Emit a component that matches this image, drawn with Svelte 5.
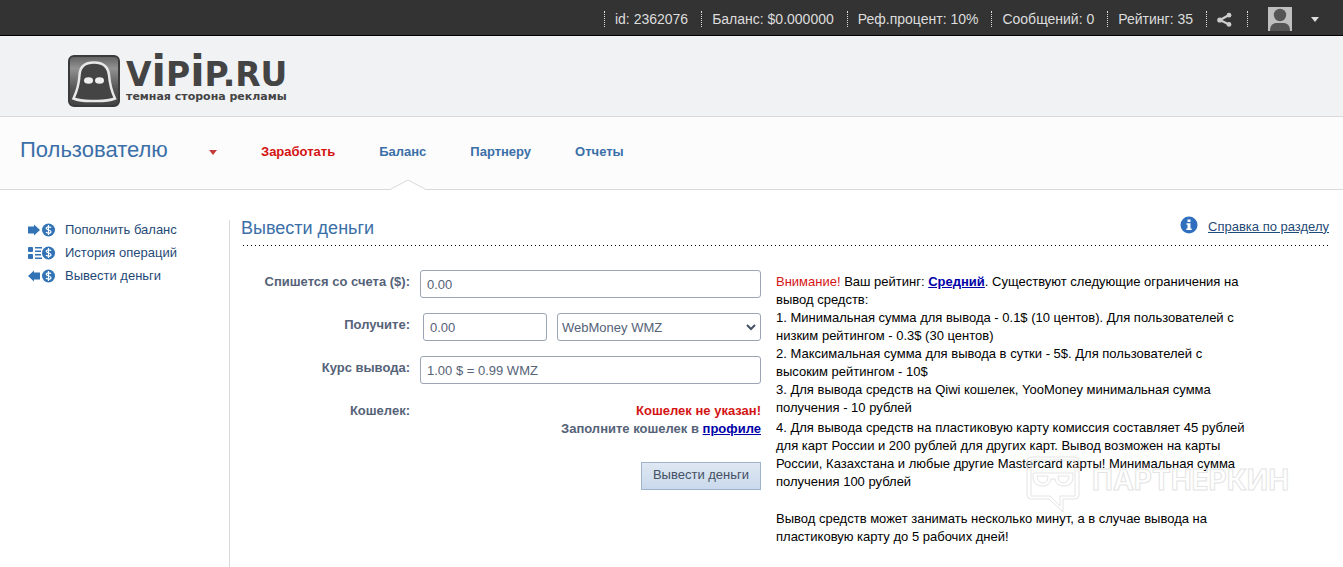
<script lang="ts">
  const stats = [
    'id: 2362076',
    'Баланс: $0.000000',
    'Реф.процент: 10%',
    'Сообщений: 0',
    'Рейтинг: 35'
  ];

  const tabs = [
    { label: 'Заработать', hot: true },
    { label: 'Баланс', active: true },
    { label: 'Партнеру' },
    { label: 'Отчеты' }
  ];

  const menu = [
    { icon: 'in', label: 'Пополнить баланс' },
    { icon: 'list', label: 'История операций' },
    { icon: 'out', label: 'Вывести деньги' }
  ];

  let amount = $state('0.00');
  let receive = $state('0.00');
  let currency = $state('WebMoney WMZ');
  let rate = $state('1.00 $ = 0.99 WMZ');
</script>

<div class="topbar">
  {#each stats as stat}
    <span class="stat">{stat}</span>
  {/each}
  <button class="share" aria-label="Поделиться">
    <svg width="15" height="15" viewBox="0 0 15 15">
      <path d="M12 3 3 8l9 4.500" fill="none" stroke="#ccc" stroke-width="2.200" />
      <circle cx="12" cy="3.200" r="2.400" fill="#ccc" />
      <circle cx="2.800" cy="8" r="2.600" fill="#ccc" />
      <circle cx="12" cy="12.400" r="2.400" fill="#ccc" />
    </svg>
  </button>
  <button class="account" aria-label="Профиль">
    <svg width="24" height="24" viewBox="0 0 24 24">
      <rect width="24" height="24" fill="#bfbfbf" />
      <circle cx="12" cy="8" r="6.200" fill="#555" />
      <path d="M2 24c0-6 3-8 7-8h6c4 0 7 2 7 8z" fill="#555" />
    </svg>
    <svg width="8" height="5" viewBox="0 0 8 5"><path d="M0 0h8L4 5z" fill="#ddd" /></svg>
  </button>
</div>

<header class="header">
  <a class="logo" href="/">
    <svg width="52" height="52" viewBox="0 0 52 52">
      <defs>
        <linearGradient id="shade" x1="0" y1="0" x2="0" y2="1">
          <stop offset="0" stop-color="#606060" />
          <stop offset="0.25" stop-color="#929292" />
          <stop offset="0.65" stop-color="#555" />
          <stop offset="1" stop-color="#434343" />
        </linearGradient>
      </defs>
      <rect x="1" y="1" width="50" height="50" rx="5" fill="url(#shade)" stroke="#3b3b3b" stroke-width="2" />
      <path
        d="M5.500 43.500C9 36 11 30 11.500 20C12 11 17 7.500 26 7.500S40 11 41 20c.8 10 2.500 16 6 23.500C39 46.500 33 46 26 46S13 46.500 5.500 43.500z"
        fill="#444"
        stroke="#e8e8e8"
        stroke-width="2.500"
      />
      <ellipse cx="20.500" cy="25.500" rx="4.500" ry="3.200" fill="#eee" />
      <ellipse cx="31.500" cy="25.500" rx="4.500" ry="3.200" fill="#eee" />
    </svg>
    <span class="brand">
      <span class="name">V<span class="tall">i</span>P<span class="tall">i</span>P.RU</span>
      <span class="slogan">темная сторона рекламы</span>
    </span>
  </a>
</header>

<nav class="nav">
  <button class="section">
    Пользователю
    <svg width="8" height="5" viewBox="0 0 8 5"><path d="M0 0h8L4 5z" fill="#c43c3c" /></svg>
  </button>
  {#each tabs as tab}
    <a class="tab" class:hot={tab.hot} href="/">
      {tab.label}
      {#if tab.active}
        <svg class="notch" width="34" height="11" viewBox="0 0 34 11">
          <path d="M0 11V10L17 1l17 9v1z" fill="#fff" />
          <path d="M0 10 17 1l17 9" fill="none" stroke="#d9d9d9" />
        </svg>
      {/if}
    </a>
  {/each}
</nav>

<div class="page">
  <aside class="sidebar">
    {#each menu as item}
      <a class="menu-item" href="/">
        <svg width="28" height="14" viewBox="0 0 28 14" fill="#3173b5">
          {#if item.icon === 'in'}
            <path d="M0 3.500h6V1.500L12 7l-6 5.500v-2H0z" />
          {:else if item.icon === 'out'}
            <path d="M12 3.500H6V1.500L0 7l6 5.500v-2h6z" />
          {:else}
            <rect y="1" width="5" height="5" rx="1" />
            <rect y="8" width="5" height="5" rx="1" />
            <path d="M7 1h7v1.400H7zM7 4.500h6v1.400H7zM7 8h6v1.400H7zM7 11.500h7v1.400H7z" />
          {/if}
          <circle cx="20.500" cy="7" r="6.500" />
          <path
            d="M23 4.800C22.500 3.800 18.200 3.300 18.200 5.300S23 6.800 23 8.800 18.500 10.300 18 9M20.500 2v10"
            fill="none"
            stroke="#fff"
            stroke-width="1.200"
          />
        </svg>
        {item.label}
      </a>
    {/each}
  </aside>

  <main class="main">
    <div class="title">
      <h1>Вывести деньги</h1>
      <a class="help" href="/">
        <svg width="18" height="18" viewBox="0 0 18 18">
          <circle cx="9" cy="9" r="8.500" fill="#2f6fbe" />
          <path d="M7.500 3.500h3v2.500h-3zM6.500 7.200h4v5.300h1.200V14H6.300v-1.500h1.200V8.700h-1z" fill="#fff" />
        </svg>
        <span>Справка по разделу</span>
      </a>
    </div>

    <div class="columns">
      <form class="form" onsubmit={(e) => e.preventDefault()}>
        <label for="amount">Спишется со счета ($):</label>
        <input id="amount" bind:value={amount} />

        <label for="receive">Получите:</label>
        <div class="pair">
          <input id="receive" bind:value={receive} />
          <div class="select">
            <select bind:value={currency} aria-label="Валюта">
              <option>WebMoney WMZ</option>
            </select>
            <svg width="10" height="7" viewBox="0 0 10 7">
              <path d="M1 1l4 4 4-4" fill="none" stroke="#445063" stroke-width="2" />
            </svg>
          </div>
        </div>

        <label for="rate">Курс вывода:</label>
        <input id="rate" bind:value={rate} />

        <span class="caption">Кошелек:</span>
        <div class="wallet">
          <span class="error">Кошелек не указан!</span><br />
          Заполните кошелек в <a href="/">профиле</a>
        </div>

        <button class="submit">Вывести деньги</button>
      </form>

      <div class="notice">
        <p>
          <span class="warn">Внимание!</span> Ваш рейтинг: <a href="/">Средний</a>. Существуют следующие ограничения на
          вывод средств:
        </p>
        <p>1. Минимальная сумма для вывода - 0.1$ (10 центов). Для пользователей с низким рейтингом - 0.3$ (30 центов)</p>
        <p>2. Максимальная сумма для вывода в сутки - 5$. Для пользователей с высоким рейтингом - 10$</p>
        <p>3. Для вывода средств на Qiwi кошелек, YooMoney минимальная сумма получения - 10 рублей</p>
        <p class="cards">
          4. Для вывода средств на пластиковую карту комиссия составляет 45 рублей для карт России и 200 рублей для
          других карт. Вывод возможен на карты России, Казахстана и любые другие Mastercard карты! Минимальная сумма
          получения 100 рублей
        </p>
        <p class="delay">
          Вывод средств может занимать несколько минут, а в случае вывода на пластиковую карту до 5 рабочих дней!
        </p>
        <div class="watermark">
          <svg width="54" height="58" viewBox="0 0 54 58" fill="none" stroke="#e4e4e4">
            <path d="M5 1h44q4 0 4 4v34q0 4-4 4H37v13L23 43H5q-4 0-4-4V5q0-4 4-4z" />
            <path d="M5 4h44v36H34v10L24 40H5z" />
            <path d="M7 17h40v5q-1 8-9 8t-9-7h-4q-1 7-9 7t-9-8z" />
            <path d="M11 20h11q0 7-5 7t-6-7zM32 20h11q-1 7-6 7t-5-7z" />
          </svg>
          <span>ПАРТНЕРКИН</span>
        </div>
      </div>
    </div>
  </main>
</div>

<style>
  :global(body) {
    background: #fff;
    font-family: 'Liberation Sans', Arial, sans-serif;
    font-size: 13px;
    color: #000;
  }

  button,
  input,
  select {
    font-family: inherit;
    box-sizing: border-box;
    margin: 0;
  }

  button {
    cursor: pointer;
  }

  .topbar {
    display: flex;
    justify-content: flex-end;
    align-items: center;
    height: 36px;
    padding: 3px 24px 0 0;
    box-sizing: border-box;
    background: #333;
    border-bottom: 1px solid #000;
    color: #ddd;
    font-size: 14px;
    line-height: 16px;
  }

  .stat {
    padding: 0 13px 0 10px;
    border-left: 1px dotted #ddd;
    white-space: nowrap;
  }

  .share,
  .account {
    display: flex;
    align-items: center;
    height: 16px;
    background: none;
    border: 0;
    border-left: 1px dotted #ddd;
  }

  .share {
    width: 41px;
    padding: 0 0 0 10px;
  }

  .account {
    gap: 19px;
    padding: 0 0 0 20px;
  }

  .header {
    display: flex;
    align-items: center;
    height: 80px;
    padding-left: 68px;
    background: #f1f2f4;
    border-bottom: 1px solid #d9d9d9;
  }

  .logo {
    display: flex;
    align-items: flex-end;
    gap: 6px;
    padding-top: 10px;
    color: #444;
    text-decoration: none;
  }

  .brand {
    display: flex;
    flex-direction: column;
    padding-bottom: 4px;
    font-family: 'DejaVu Sans', sans-serif;
    font-weight: bold;
  }

  .name {
    font-size: 33px;
    line-height: 32px;
  }

  .tall {
    font-size: 42px;
    line-height: 32px;
  }

  .slogan {
    font-size: 11px;
    line-height: 12px;
  }

  .nav {
    display: flex;
    height: 72px;
    background: #fcfcfc;
    border-bottom: 1px solid #d9d9d9;
  }

  .section {
    display: flex;
    align-items: center;
    justify-content: space-between;
    width: 217px;
    margin-right: 22px;
    padding: 0 0 6px 20px;
    background: none;
    border: 0;
    color: #3b6fa8;
    font-size: 22px;
  }

  .section svg {
    margin-top: 4px;
  }

  .tab {
    position: relative;
    padding: 0 22px;
    color: #3b6fa8;
    font-weight: bold;
    line-height: 70px;
    text-decoration: none;
  }

  .tab.hot {
    color: #d41414;
  }

  .notch {
    position: absolute;
    left: 50%;
    bottom: -1px;
    margin-left: -12px;
  }

  .page {
    display: flex;
    padding-top: 28px;
  }

  .sidebar {
    width: 229px;
    flex-shrink: 0;
  }

  .menu-item {
    display: flex;
    align-items: center;
    gap: 9px;
    height: 23px;
    padding-left: 28px;
    color: #1f4a78;
    text-decoration: none;
  }

  .main {
    flex: 1;
    min-height: 347px;
    margin-top: 2px;
    border-left: 1px solid #d9d9d9;
    box-sizing: border-box;
    padding: 0 14px 0 11px;
  }

  .title {
    display: flex;
    justify-content: space-between;
    align-items: flex-start;
    height: 26px;
    background: repeating-linear-gradient(90deg, transparent 0 2px, #000 2px 3px, transparent 3px 4px) bottom / 100% 1px no-repeat;
  }

  h1 {
    margin: 0;
    color: #3b6fa8;
    font-size: 18px;
    font-weight: normal;
    line-height: 16px;
  }

  .help {
    display: flex;
    align-items: center;
    gap: 10px;
    margin-top: -4px;
    color: #1f4a78;
  }

  .help span {
    padding-top: 2px;
  }

  .columns {
    display: flex;
    gap: 15px;
    padding-top: 24px;
  }

  .form {
    display: grid;
    grid-template-columns: 169px 341px;
    gap: 15px 10px;
    align-content: start;
    flex-shrink: 0;
    color: #556278;
  }

  .form label,
  .caption {
    font-weight: bold;
    line-height: 24px;
    text-align: right;
  }

  input,
  select {
    width: 100%;
    height: 28px;
    padding: 0 6px;
    background: #fff;
    border: 1px solid #9aa5b5;
    border-radius: 3px;
    color: #556278;
    font-size: 13px;
  }

  .pair {
    display: grid;
    grid-template-columns: 124px 1fr;
    gap: 10px;
    padding-left: 3px;
  }

  .select {
    position: relative;
  }

  select {
    appearance: none;
    padding: 0 4px;
  }

  .select svg {
    position: absolute;
    right: 5px;
    top: 11px;
    pointer-events: none;
  }

  .wallet {
    padding-top: 3px;
    font-weight: bold;
    line-height: 18px;
    text-align: right;
  }

  .wallet a,
  .notice a {
    color: #0000a8;
  }

  .error {
    color: #d41414;
  }

  .submit {
    grid-column: 2;
    justify-self: end;
    width: 120px;
    height: 28px;
    margin-top: 9px;
    padding: 0 0 3px;
    background: linear-gradient(#dfe8f3, #c9d9ec);
    border: 1px solid #9fb3cc;
    color: #445063;
    font-size: 13px;
  }

  .notice {
    position: relative;
    max-width: 472px;
    padding-top: 3px;
    line-height: 18px;
  }

  .notice p {
    margin: 0;
  }

  .notice a {
    font-weight: bold;
  }

  .notice .cards {
    margin-top: 2px;
  }

  .notice .delay {
    margin-top: 19px;
  }

  .warn {
    color: #d41414;
  }

  .watermark {
    position: absolute;
    left: 250px;
    top: 186px;
    display: flex;
    align-items: flex-start;
    gap: 12px;
    pointer-events: none;
  }

  .watermark span {
    color: transparent;
    font-family: Inter, sans-serif;
    font-size: 28px;
    font-weight: 700;
    line-height: 48px;
    -webkit-text-stroke: 1px #e4e4e4;
  }
</style>
